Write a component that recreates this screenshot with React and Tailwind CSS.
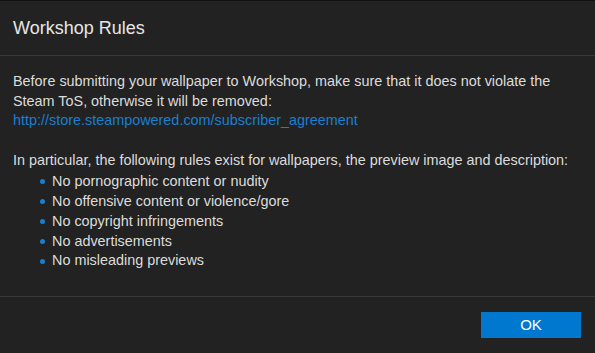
import React from "react";

const rules = [
  "No pornographic content or nudity",
  "No offensive content or violence/gore",
  "No copyright infringements",
  "No advertisements",
  "No misleading previews",
];

const App = () => {
  return (
    <div
      className="w-[595px] h-[353px] bg-[#222222] border-t border-[#111111] flex flex-col text-[#dcdcdc]"
      style={{ fontFamily: '"Liberation Sans", Arial, sans-serif' }}
    >
      <div className="h-[55px] flex items-center px-[13px] border-b border-[#3a3a3a]">
        <h1 className="text-[18px] text-[#e6e6e6]">Workshop Rules</h1>
      </div>
      <div className="flex-1 px-[13px] pt-[16px] text-[14.4px] leading-[19.5px] whitespace-nowrap">
        <p>
          Before submitting your wallpaper to Workshop, make sure that it does not violate the
          <br />
          Steam ToS, otherwise it will be removed:
        </p>
        <a className="text-[#1a7fd0]" href="#">
          http://store.steampowered.com/subscriber_agreement
        </a>
        <p className="mt-[20px]">
          In particular, the following rules exist for wallpapers, the preview image and description:
        </p>
        <ul className="pl-[27px] pt-[2px]">
          {rules.map((rule) => (
            <li key={rule} className="flex items-center gap-[7px] h-[19.8px]">
              <span className="w-[5px] h-[5px] rounded-full bg-[#1a7fd0]" />
              <span>{rule}</span>
            </li>
          ))}
        </ul>
      </div>
      <div className="h-[57px] border-t border-[#3a3a3a] flex justify-end items-start pt-[15px] pr-[14px]">
        <button className="w-[100px] h-[26px] bg-[#0078cf] text-white text-[15px]">OK</button>
      </div>
    </div>
  );
};

export default App;
